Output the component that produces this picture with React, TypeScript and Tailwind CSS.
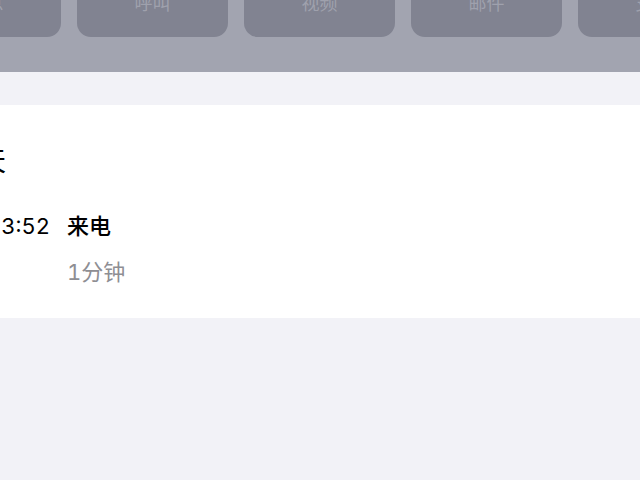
import React from 'react';

const actions = ['信息', '呼叫', '视频', '邮件', '支付'];

const ActionBar: React.FC = () => (
  <div className="h-[72px] overflow-hidden bg-[#a2a4b0]">
    <div className="flex gap-[16px] ml-[-90px] mt-[-40px]">
      {actions.map((label) => (
        <div
          key={label}
          className="w-[151px] h-[77px] shrink-0 rounded-[14px] bg-[#818391] flex flex-col items-center justify-end pb-[24px]"
        >
          <span className="text-[18px] leading-[18px] text-[#9fa1ad]">{label}</span>
        </div>
      ))}
    </div>
  </div>
);

const App: React.FC = () => {
  // single entry in the call log
  const call = { time: '13:52', kind: '来电', duration: '1分钟' };

  return (
    <div
      className="w-[640px] h-[480px] overflow-hidden bg-[#f2f2f7]"
      style={{ fontFamily: 'Inter, "Noto Sans CJK SC", sans-serif' }}
    >
      <ActionBar />

      <main className="mt-[33px] bg-white h-[213px] overflow-hidden">
        <div className="ml-[-48px] pt-[41px]">
          <h2 className="text-[27px] leading-[32px] text-black">今天</h2>

          <div className="flex items-center mt-[34px]">
            <div className="w-[98px] text-right text-[22px] leading-[28px] tabular-nums text-black">{call.time}</div>
            <div className="ml-[17px] text-[22px] leading-[28px] font-medium text-black">{call.kind}</div>
          </div>

          <div className="pl-[115px] mt-[18px] text-[22px] leading-[28px] tabular-nums text-[#8e8e93]">
            {call.duration}
          </div>
        </div>
      </main>
    </div>
  );
};

export default App;
